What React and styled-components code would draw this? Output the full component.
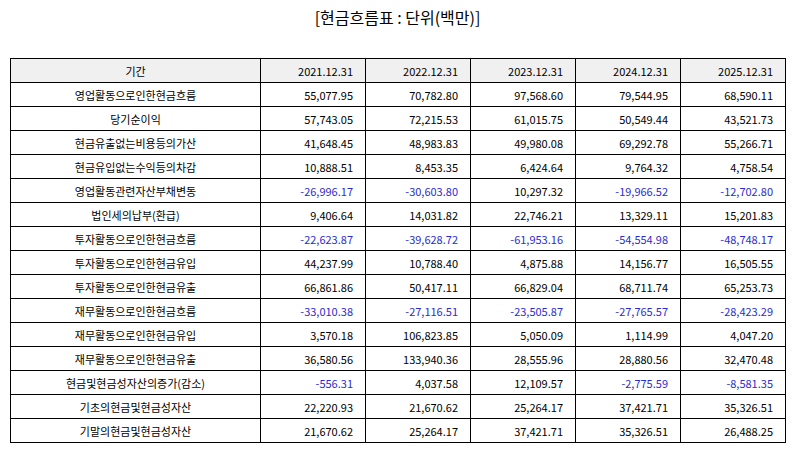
import styled, { createGlobalStyle } from 'styled-components';

const GlobalStyle = createGlobalStyle`
    body {
        margin: 0;
        background: #ffffff;
        font-family: "Noto Sans CJK KR", "Noto Sans", sans-serif;
    }
`;

const Page = styled.div`
    width: 795px;
    height: 452px;
    padding: 0 10px;
    box-sizing: border-box;
`;

const Title = styled.h1`
    margin: 0;
    height: 58px;
    padding-top: 5px;
    box-sizing: border-box;
    text-align: center;
    font-size: 16px;
    font-weight: 400;
    color: #000;
`;

const Table = styled.table`
    width: 775px;
    border-collapse: collapse;
    table-layout: fixed;
    font-size: 11px;
    color: #000;
`;

const Col = styled.col`
    width: ${(p) => (p.wide ? '250px' : '105px')};
`;

const Cell = styled.td`
    height: 23px;
    padding: ${(p) => (p.label ? '0' : '0 12px 0 0')};
    border: 1.3px solid #000;
    text-align: ${(p) => (p.label ? 'center' : 'right')};
    color: ${(p) => (p.neg ? '#2b2bd4' : '#000')};
    background: #fff;
    white-space: nowrap;
`;

const HeadCell = styled(Cell).attrs({ as: 'th' })`
    font-weight: 400;
    background: #f0f0f0;
`;

const years = ['2021.12.31', '2022.12.31', '2023.12.31', '2024.12.31', '2025.12.31'];

const rows = [
    ['영업활동으로인한현금흐름', '55,077.95', '70,782.80', '97,568.60', '79,544.95', '68,590.11'],
    ['당기순이익', '57,743.05', '72,215.53', '61,015.75', '50,549.44', '43,521.73'],
    ['현금유출없는비용등의가산', '41,648.45', '48,983.83', '49,980.08', '69,292.78', '55,266.71'],
    ['현금유입없는수익등의차감', '10,888.51', '8,453.35', '6,424.64', '9,764.32', '4,758.54'],
    ['영업활동관련자산부채변동', '-26,996.17', '-30,603.80', '10,297.32', '-19,966.52', '-12,702.80'],
    ['법인세의납부(환급)', '9,406.64', '14,031.82', '22,746.21', '13,329.11', '15,201.83'],
    ['투자활동으로인한현금흐름', '-22,623.87', '-39,628.72', '-61,953.16', '-54,554.98', '-48,748.17'],
    ['투자활동으로인한현금유입', '44,237.99', '10,788.40', '4,875.88', '14,156.77', '16,505.55'],
    ['투자활동으로인한현금유출', '66,861.86', '50,417.11', '66,829.04', '68,711.74', '65,253.73'],
    ['재무활동으로인한현금흐름', '-33,010.38', '-27,116.51', '-23,505.87', '-27,765.57', '-28,423.29'],
    ['재무활동으로인한현금유입', '3,570.18', '106,823.85', '5,050.09', '1,114.99', '4,047.20'],
    ['재무활동으로인한현금유출', '36,580.56', '133,940.36', '28,555.96', '28,880.56', '32,470.48'],
    ['현금및현금성자산의증가(감소)', '-556.31', '4,037.58', '12,109.57', '-2,775.59', '-8,581.35'],
    ['기초의현금및현금성자산', '22,220.93', '21,670.62', '25,264.17', '37,421.71', '35,326.51'],
    ['기말의현금및현금성자산', '21,670.62', '25,264.17', '37,421.71', '35,326.51', '26,488.25'],
];

const App = () => {
    return (
        <Page>
            <GlobalStyle />
            <Title>[현금흐름표 : 단위(백만)]</Title>
            <Table>
                <colgroup>
                    <Col wide />
                    {years.map((y) => (
                        <Col key={y} />
                    ))}
                </colgroup>
                <thead>
                    <tr>
                        <HeadCell label>기간</HeadCell>
                        {years.map((y) => (
                            <HeadCell key={y}>{y}</HeadCell>
                        ))}
                    </tr>
                </thead>
                <tbody>
                    {rows.map(([name, ...vals]) => (
                        <tr key={name}>
                            <Cell label>{name}</Cell>
                            {vals.map((v, i) => (
                                <Cell key={i} neg={v.startsWith('-')}>{v}</Cell>
                            ))}
                        </tr>
                    ))}
                </tbody>
            </Table>
        </Page>
    );
};

export default App;
